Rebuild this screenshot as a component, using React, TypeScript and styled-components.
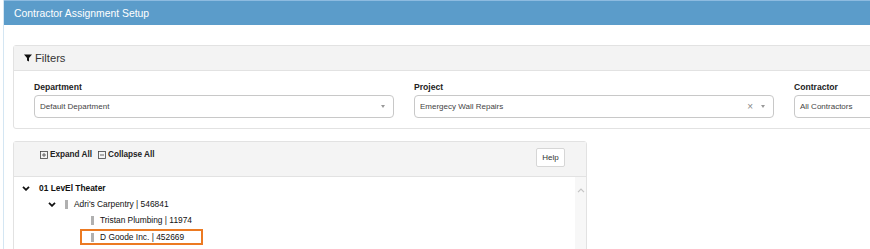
import React from "react";
import styled, { createGlobalStyle } from "styled-components";

const GlobalStyle = createGlobalStyle`
  html, body {
    margin: 0;
    padding: 0;
    background: #ffffff;
  }
  body {
    font-family: "Liberation Sans", Arial, sans-serif;
    color: #222;
    overflow: hidden;
  }
`;

const Page = styled.div`
  width: 870px;
  height: 249px;
  overflow: hidden;
  margin-left: 3px;
  border-left: 1px solid #d4e6f3;
`;

const Header = styled.header`
  height: 24px;
  background: #5b9cca;
  border-top: 1px solid #8dbbe0;
  display: flex;
  align-items: center;
  padding-left: 10px;
`;

const Title = styled.h1`
  margin: 0;
  font-size: 10.4px;
  font-weight: normal;
  color: #ffffff;
`;

const Content = styled.div`
  padding: 20px 0 0 9px;
`;

const Panel = styled.section<{ $width: number }>`
  width: ${(props) => props.$width}px;
  border: 1px solid #e2e2e2;
  border-radius: 3px;
  background: #ffffff;
  & + & {
    margin-top: 12px;
  }
`;

const FilterHeading = styled.div`
  height: 24px;
  background: #f3f3f3;
  border-bottom: 1px solid #e2e2e2;
  display: flex;
  align-items: center;
  gap: 3px;
  padding-left: 10px;
  font-size: 11.2px;
  color: #333;
`;

const FilterBody = styled.div`
  display: grid;
  grid-template-columns: 360px 360px 360px;
  column-gap: 20px;
  padding: 10px 20px 10px 20px;
`;

const Field = styled.div`
  display: flex;
  flex-direction: column;
`;

const Label = styled.label`
  font-size: 8.6px;
  font-weight: bold;
  line-height: 12px;
  margin-bottom: 2px;
  color: #222;
`;

const Select = styled.div`
  height: 23px;
  box-sizing: border-box;
  border: 1px solid #c8c8c8;
  border-radius: 4px;
  display: flex;
  align-items: center;
  padding: 0 8px 0 5px;
  font-size: 8px;
  color: #444;
`;

const SelectValue = styled.span`
  flex: 1;
`;

const ClearMark = styled.span`
  font-size: 10px;
  color: #888;
  margin-right: 8px;
`;

const Caret = styled.span`
  width: 0;
  height: 0;
  border-left: 2.5px solid transparent;
  border-right: 2.5px solid transparent;
  border-top: 3px solid #999;
`;

const TreeHeading = styled.div`
  height: 35px;
  box-sizing: border-box;
  background: #f4f4f4;
  border-bottom: 1px solid #e2e2e2;
  display: flex;
  justify-content: space-between;
  align-items: flex-start;
  padding: 6px 21px 0 26px;
`;

const TreeActions = styled.div`
  display: flex;
  gap: 6px;
  margin-top: 2px;
`;

const Action = styled.span`
  display: inline-flex;
  align-items: center;
  gap: 2px;
  font-size: 8.2px;
  font-weight: bold;
  color: #222;
`;

const HelpButton = styled.button`
  width: 29px;
  height: 19px;
  padding: 0;
  border: 1px solid #d6d6d6;
  border-radius: 2px;
  background: #ffffff;
  font-family: inherit;
  font-size: 8px;
  color: #333;
`;

const TreeBody = styled.div`
  display: flex;
  height: 80px;
`;

const TreeList = styled.ul`
  flex: 1;
  list-style: none;
  margin: 0;
  padding: 3px 0 0 0;
`;

const Scrollbar = styled.div`
  width: 11px;
  background: #f7f7f7;
  display: flex;
  justify-content: center;
  padding-top: 11px;
  box-sizing: border-box;
`;

const Row = styled.li<{ $level: number }>`
  display: flex;
  align-items: center;
  height: 16px;
  padding-left: ${(props) => 8 + props.$level * 26}px;
  font-size: 8.4px;
`;

const ChevronSlot = styled.span`
  width: 17px;
  display: inline-flex;
  align-items: center;
`;

const Node = styled.span<{ $highlight?: boolean }>`
  display: inline-flex;
  align-items: center;
  gap: 6px;
  box-sizing: border-box;
  ${(props) =>
    props.$highlight
      ? `
    height: 16px;
    border: 2px solid #ec7a22;
    padding: 0 17px 0 9px;
    margin-left: -11px;
    margin-top: 2px;
  `
      : ""}
`;

const Bar = styled.span`
  width: 3px;
  height: 9px;
  background: #b0b0b0;
`;

const NodeText = styled.span<{ $bold?: boolean }>`
  font-weight: ${(props) => (props.$bold ? "bold" : "normal")};
  color: #111;
`;

const FilterIcon = () => (
  <svg width="8" height="8" viewBox="0 0 8 8">
    <path d="M0 0.5 H8 L5 4 V7.5 L3 6.5 V4 Z" fill="#111" />
  </svg>
);

const BoxIcon = ({ plus }: { plus?: boolean }) => (
  <svg width="8" height="8" viewBox="0 0 8 8">
    <rect x="0.5" y="0.5" width="7" height="7" fill="none" stroke="#444" strokeWidth="0.8" />
    <path d="M2 4 H6" stroke="#444" strokeWidth="0.8" />
    {plus && <path d="M4 2 V6" stroke="#444" strokeWidth="0.8" />}
  </svg>
);

const Chevron = ({ color = "#111", up = false }: { color?: string; up?: boolean }) => (
  <svg width="8" height="5" viewBox="0 0 8 5">
    <polyline
      points={up ? "1,4.2 4,1.2 7,4.2" : "1,0.8 4,3.8 7,0.8"}
      fill="none"
      stroke={color}
      strokeWidth={up ? 1.2 : 1.8}
    />
  </svg>
);

interface TreeItem {
  label: string;
  level: number;
  bold?: boolean;
  expandable?: boolean;
  bar?: boolean;
  highlight?: boolean;
}

const treeItems: TreeItem[] = [
  { label: "01 LevEl Theater", level: 0, bold: true, expandable: true },
  { label: "Adri's Carpentry | 546841", level: 1, expandable: true, bar: true },
  { label: "Tristan Plumbing | 11974", level: 2, bar: true },
  { label: "D Goode Inc. | 452669", level: 2, bar: true, highlight: true },
];

const filters = [
  { label: "Department", value: "Default Department", clearable: false },
  { label: "Project", value: "Emergecy Wall Repairs", clearable: true },
  { label: "Contractor", value: "All Contractors", clearable: false },
];

const App = () => {
  return (
    <>
      <GlobalStyle />
      <Page>
        <Header>
          <Title>Contractor Assignment Setup</Title>
        </Header>
        <Content>
          <Panel $width={1000}>
            <FilterHeading>
              <FilterIcon />
              Filters
            </FilterHeading>
            <FilterBody>
              {filters.map((f) => (
                <Field key={f.label}>
                  <Label>{f.label}</Label>
                  <Select>
                    <SelectValue>{f.value}</SelectValue>
                    {f.clearable && <ClearMark>×</ClearMark>}
                    <Caret />
                  </Select>
                </Field>
              ))}
            </FilterBody>
          </Panel>
          <Panel $width={572}>
            <TreeHeading>
              <TreeActions>
                <Action>
                  <BoxIcon plus />
                  Expand All
                </Action>
                <Action>
                  <BoxIcon />
                  Collapse All
                </Action>
              </TreeActions>
              <HelpButton>Help</HelpButton>
            </TreeHeading>
            <TreeBody>
              <TreeList>
                {treeItems.map((item) => (
                  <Row key={item.label} $level={item.level}>
                    <ChevronSlot>{item.expandable && <Chevron />}</ChevronSlot>
                    <Node $highlight={item.highlight}>
                      {item.bar && <Bar />}
                      <NodeText $bold={item.bold}>{item.label}</NodeText>
                    </Node>
                  </Row>
                ))}
              </TreeList>
              <Scrollbar>
                <Chevron color="#c4c4c4" up />
              </Scrollbar>
            </TreeBody>
          </Panel>
        </Content>
      </Page>
    </>
  );
};

export default App;
